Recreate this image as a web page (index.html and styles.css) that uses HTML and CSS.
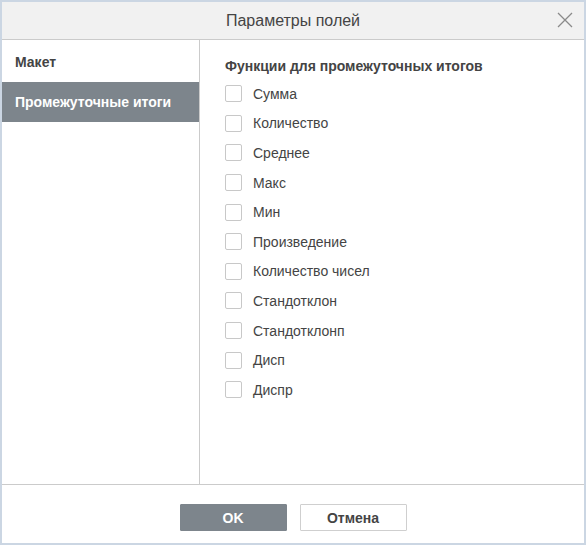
FILE: index.html
```html
<!DOCTYPE html>
<html lang="ru">
<head>
<meta charset="utf-8">
<title>Параметры полей</title>
<link rel="stylesheet" href="styles.css">
</head>
<body>
<div class="dialog">
  <div class="header">
    <span class="title">Параметры полей</span>
    <svg class="close" width="16" height="16" viewBox="0 0 16 16"><path d="M1 1L15 15M15 1L1 15" stroke="#8a8a8a" stroke-width="1.3" fill="none"/></svg>
  </div>
  <div class="body">
    <div class="sidebar">
      <div class="tab">Макет</div>
      <div class="tab active">Промежуточные итоги</div>
    </div>
    <div class="panel">
      <div class="heading">Функции для промежуточных итогов</div>
      <div class="list">
        <label class="row"><span class="box"></span>Сумма</label>
        <label class="row"><span class="box"></span>Количество</label>
        <label class="row"><span class="box"></span>Среднее</label>
        <label class="row"><span class="box"></span>Макс</label>
        <label class="row"><span class="box"></span>Мин</label>
        <label class="row"><span class="box"></span>Произведение</label>
        <label class="row"><span class="box"></span>Количество чисел</label>
        <label class="row"><span class="box"></span>Стандотклон</label>
        <label class="row"><span class="box"></span>Стандотклонп</label>
        <label class="row"><span class="box"></span>Дисп</label>
        <label class="row"><span class="box"></span>Диспр</label>
      </div>
    </div>
  </div>
  <div class="footer">
    <button class="btn primary">OK</button>
    <button class="btn">Отмена</button>
  </div>
</div>
</body>
</html>
```
FILE: styles.css
```css
html, body {
  margin: 0;
  padding: 0;
}
body {
  background: #cbd6e3;
  padding: 2px;
  width: 586px;
  height: 545px;
  box-sizing: border-box;
  font-family: "Liberation Sans", Arial, sans-serif;
  color: #444;
}
.dialog {
  width: 582px;
  height: 541px;
  background: #fff;
  display: flex;
  flex-direction: column;
}
.header {
  height: 37px;
  background: #f1f1f1;
  border-bottom: 1px solid #cbcbcb;
  display: flex;
  align-items: center;
  justify-content: center;
  position: relative;
  flex: none;
}
.title {
  font-size: 16px;
  color: #444;
}
.close {
  position: absolute;
  right: 11px;
  top: 10px;
}
.body {
  flex: 1;
  display: flex;
  border-bottom: 1px solid #cbcbcb;
}
.sidebar {
  width: 197px;
  border-right: 1px solid #cbcbcb;
  padding-top: 2px;
  flex: none;
}
.tab {
  height: 40px;
  display: flex;
  align-items: center;
  padding-left: 13px;
  font-size: 14px;
  font-weight: bold;
  color: #444;
}
.tab.active {
  background: #7d858c;
  color: #fff;
}
.panel {
  padding: 18px 0 0 25px;
  flex: 1;
}
.heading {
  font-size: 14px;
  font-weight: bold;
  color: #444;
  height: 16px;
  line-height: 16px;
  margin-bottom: 5px;
}
.row {
  display: flex;
  align-items: center;
  height: 29.6px;
  font-size: 14px;
  color: #444;
}
.box {
  width: 17px;
  height: 17px;
  border: 1px solid #c8c8c8;
  border-radius: 2px;
  box-sizing: border-box;
  margin-right: 11px;
  flex: none;
}
.footer {
  height: 58px;
  flex: none;
  display: flex;
  justify-content: center;
  align-items: flex-start;
  padding-top: 19px;
  box-sizing: border-box;
  gap: 13px;
}
.btn {
  width: 107px;
  height: 27px;
  border: 1px solid #cfcfcf;
  background: #fff;
  border-radius: 1px;
  font-family: "Liberation Sans", Arial, sans-serif;
  font-size: 14px;
  font-weight: bold;
  color: #444;
  padding: 0;
}
.btn.primary {
  background: #7d858c;
  border-color: #7d858c;
  color: #fff;
}
```
